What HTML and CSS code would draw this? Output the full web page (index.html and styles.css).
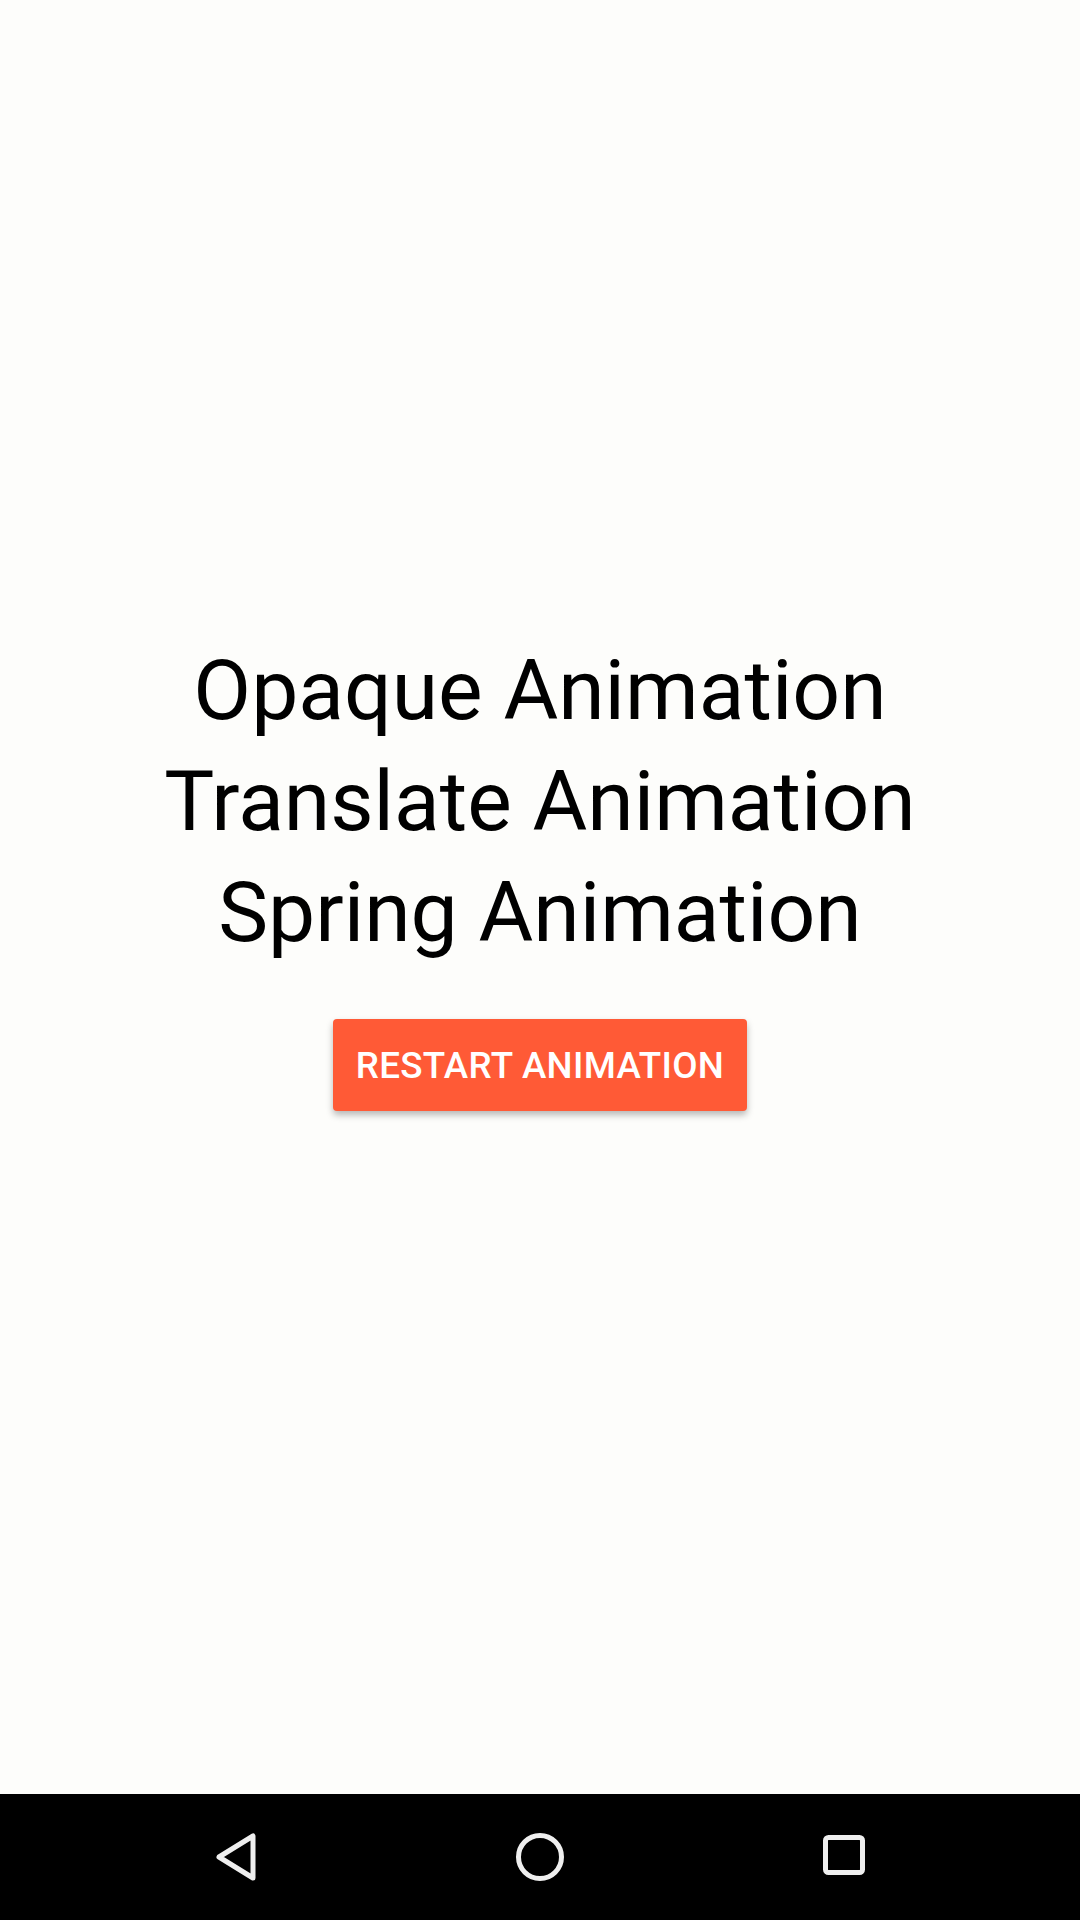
FILE: index.html
```html
<!DOCTYPE html>
<html>
<head>
<meta charset="utf-8">
<link rel="stylesheet" href="styles.css">
</head>
<body>
<div class="screen">
  <main class="content">
    <div class="labels">
      <div class="label">Opaque Animation</div>
      <div class="label">Translate Animation</div>
      <div class="label">Spring Animation</div>
    </div>
    <button class="restart">RESTART ANIMATION</button>
  </main>
  <nav class="navbar">
    <div class="navitem">
      <svg width="60" height="60" viewBox="0 0 60 60"><polygon points="13,30 47,9 47,51" fill="none" stroke="#efefef" stroke-width="5" stroke-linejoin="round"/></svg>
    </div>
    <div class="navitem">
      <svg width="60" height="60" viewBox="0 0 60 60"><circle cx="30" cy="30" r="21.5" fill="none" stroke="#efefef" stroke-width="5"/></svg>
    </div>
    <div class="navitem">
      <svg width="60" height="60" viewBox="0 0 60 60"><rect x="11.5" y="10.5" width="37" height="35" rx="3" fill="none" stroke="#efefef" stroke-width="5"/></svg>
    </div>
  </nav>
</div>
</body>
</html>
```
FILE: styles.css
```css
html, body {
  margin: 0;
  padding: 0;
}
body {
  width: 1080px;
  height: 1920px;
  background: #fdfdfb;
  font-family: Roboto, "Liberation Sans", sans-serif;
  overflow: hidden;
}
.screen {
  display: flex;
  flex-direction: column;
  height: 1920px;
}
.content {
  flex: 1;
  display: flex;
  flex-direction: column;
  align-items: center;
  justify-content: center;
  padding-bottom: 48px;
}
.labels {
  display: flex;
  flex-direction: column;
  align-items: center;
}
.label {
  font-size: 84px;
  line-height: 111px;
  color: #000;
  white-space: nowrap;
}
.restart {
  margin-top: 51px;
  width: 414px;
  height: 92px;
  border: none;
  border-radius: 4px;
  background: #ff5a36;
  color: #fff;
  font-family: Roboto, "Liberation Sans", sans-serif;
  font-weight: 500;
  font-size: 36.75px;
  letter-spacing: 0.3px;
  box-shadow: 0 4px 7px rgba(0,0,0,0.28);
  padding: 0;
}
.navbar {
  height: 126px;
  background: #000;
  display: flex;
  justify-content: center;
  align-items: center;
}
.navitem {
  width: 304px;
  display: flex;
  justify-content: center;
  align-items: center;
}
.navitem svg {
  display: block;
}
```
